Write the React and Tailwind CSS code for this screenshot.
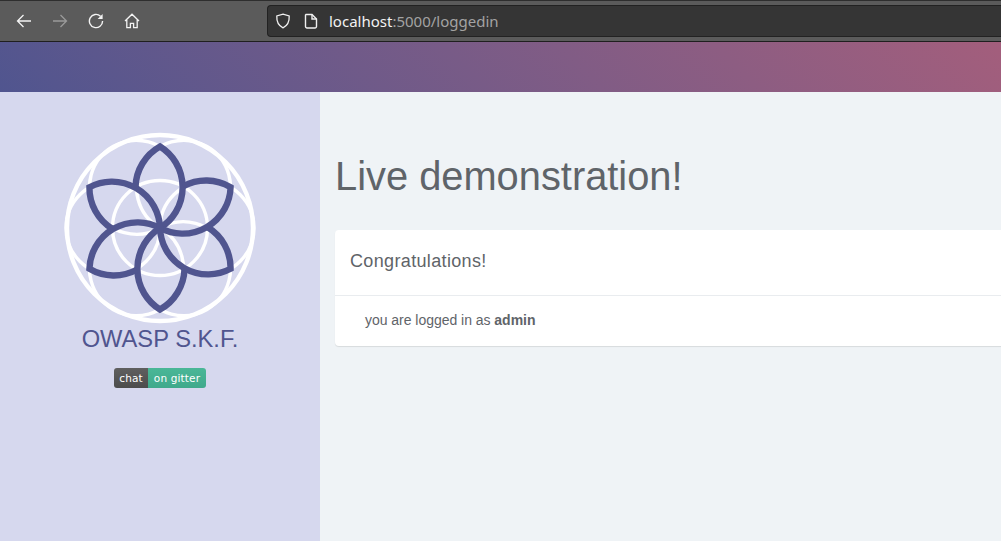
import React from 'react';

const sans = 'font-["Liberation_Sans",Arial,sans-serif]';
const angles = [0, 60, 120, 180, 240, 300];

function Logo() {
  return (
    <svg width="196" height="196" viewBox="62 130 196 196" fill="none">
      <g stroke="#ffffff" strokeWidth="3.4">
        <circle cx="160" cy="228" r="93" strokeWidth="4.4" />
        <circle cx="160" cy="228" r="47.5" />
        {angles.map((a) => (
          <circle key={a} cx="160" cy="181" r="47" transform={`rotate(${a + 30} 160 228)`} />
        ))}
      </g>
      {/* pinwheel: long arc centre to tip, short arc back until it meets the next petal */}
      <g stroke="#50558f" strokeWidth="6.4" strokeLinejoin="miter" strokeMiterlimit="8">
        {angles.map((a) => (
          <path
            key={a}
            d="M160 228 A48 48 0 0 0 160 146.500 A48 48 0 0 0 135.500 187"
            transform={`rotate(${a} 160 228)`}
          />
        ))}
      </g>
    </svg>
  );
}

function Toolbar() {
  return (
    <div className="h-[42px] flex items-center bg-[#5b5b5b] border-t border-b border-t-[#2e2e2e] border-b-[#1f1f1f]">
      <div className="w-[267px] flex items-center pl-[16px] gap-[20px]">
        <svg width="16" height="16" viewBox="0 0 16 16" fill="none" stroke="#f4f4f4" strokeWidth="1.3">
          <path d="M15 8H1.5M7.5 2 1.5 8l6 6" />
        </svg>
        <svg width="16" height="16" viewBox="0 0 16 16" fill="none" stroke="#9a9a9a" strokeWidth="1.3">
          <path d="M1 8h13.5M8.5 2l6 6-6 6" />
        </svg>
        <svg width="16" height="16" viewBox="0 0 16 16" fill="none" stroke="#f4f4f4" strokeWidth="1.4">
          <path d="M12.5 3.2A6.6 6.6 0 1 0 14.6 8" />
          <path d="M14.6 1v5h-5z" fill="#f4f4f4" stroke="none" />
        </svg>
        <svg width="16" height="16" viewBox="0 0 16 16" fill="none" stroke="#f4f4f4" strokeWidth="1.3">
          <path d="M1 8 8 1.2 15 8M2.8 6.5v8.2h3.600v-4.400h3.200v4.400h3.600V6.500" />
        </svg>
      </div>
      <div className="flex-1 h-[32px] flex items-center bg-[#353535] border border-[#222222] border-r-0 rounded-l-[4px] pl-[7px] font-['Noto_Sans',sans-serif] text-[15px]">
        <svg width="16" height="16" viewBox="0 0 16 16" fill="none" stroke="#f0f0f0" strokeWidth="1.3">
          <path d="M8 1.2 14.200 3c.3 5.600-1.600 9.600-6.200 11.800C3.400 12.600 1.500 8.600 1.800 3z" />
        </svg>
        <svg className="ml-[13px]" width="14" height="16" viewBox="0 0 14 16" fill="none" stroke="#f0f0f0" strokeWidth="1.4">
          <path d="M2 1.500h6l4.500 4.500v7.500a1.500 1.500 0 0 1-1.500 1.500H3a1.500 1.500 0 0 1-1.500-1.500V2z" />
          <path d="M8 1.500V6h4.500" />
        </svg>
        <span className="ml-[11px] text-[#f2f2f2]">localhost</span>
        <span className="text-[#a3a3a3]">:5000/loggedin</span>
      </div>
    </div>
  );
}

export default function App() {
  return (
    <div className={`w-[1001px] h-[541px] overflow-hidden flex flex-col ${sans}`}>
      <Toolbar />
      <div className="h-[50px] bg-linear-45 from-[#50558f] to-[#a35e7c]" />
      <div className="flex-1 flex min-h-0">
        <aside className="w-[320px] bg-[#d6d8ee] flex flex-col items-center pt-[38px]">
          <Logo />
          <h2 className="mt-[-2px] text-[23.700px] leading-[30px] text-[#50558f]">OWASP S.K.F.</h2>
          <div className="mt-[14px] h-[20px] flex rounded-[3px] overflow-hidden text-[10.500px] tracking-[0.15px] text-white font-['DejaVu_Sans',sans-serif] leading-[20px]">
            <span className="w-[34px] text-center bg-linear-to-b from-[#5f5f5f] to-[#4c4c4c]">chat</span>
            <span className="w-[58px] text-center bg-linear-to-b from-[#4ab797] to-[#40a98b]">on gitter</span>
          </div>
        </aside>
        <main className="flex-1 min-w-0 overflow-hidden bg-[#eff3f6] pl-[15px] pt-[60px] text-[#5f6469]">
          <h1 className="text-[39.850px] leading-[48px]">Live demonstration!</h1>
          <div className="mt-[30px] w-[700px] bg-white rounded-[4px] shadow-[0_1px_1px_rgba(0,0,0,0.1)]">
            <div className="h-[66px] pb-[2px] px-[15px] flex items-center border-b border-[#e9ecef] text-[18px] tracking-[0.35px]">
              Congratulations!
            </div>
            <div className="h-[50px] pl-[30px] pb-[2px] flex items-center text-[14px] tracking-[-0.03px]">
              <span>
                you are logged in as <b>admin</b>
              </span>
            </div>
          </div>
        </main>
      </div>
    </div>
  );
}
